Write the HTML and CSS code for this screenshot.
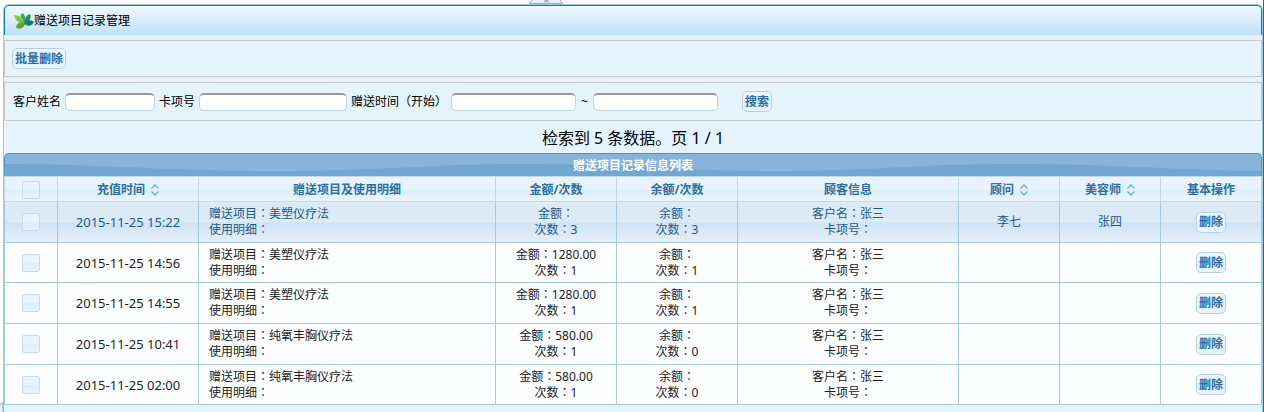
FILE: index.html
```html
<!DOCTYPE html>
<html lang="zh-CN">
<head>
<meta charset="utf-8">
<title>赠送项目记录管理</title>
<link rel="stylesheet" href="styles.css">
</head>
<body>
<svg class="handle-top" viewBox="0 0 34 4" width="34" height="4" aria-hidden="true"><path d="M0 4 3 0H31L34 4Z" fill="#eceefa"/><path d="M0 3.5H34M1 3 3 0M33 3 31 0" stroke="#9da6d3" fill="none"/><path d="M16 0h3v1h1v1h-5V1h1z" fill="#9da6d3"/></svg>
<svg class="handle-side" viewBox="0 0 4 10" width="4" height="10" aria-hidden="true"><path d="M0 3 3 0V10H0Z" fill="#eceefa"/><path d="M0 2.5 3 .5V10" stroke="#9da6d3" fill="none"/></svg>
<main class="page">
  <header class="title-bar">
    <svg class="leaf" viewBox="0 0 20 18" width="20" height="18" aria-hidden="true">
      <path d="M11 12C7 9 5 4 8 1C11 3 13 7 11 12Z" fill="#3fae5c"/>
      <path d="M11 12C5 12 1 8 0 3C6 3 10 7 11 12Z" fill="#8ccf45"/>
      <path d="M11 12C7 9 2 11 2 16C6 18 10 16 11 12Z" fill="#62a83a"/>
      <path d="M11 12C10 7 12 3 16 2C18 6 15 10 11 12Z" fill="#1f9a78"/>
      <path d="M11 12C13 7 17 8 20 10C18 14 14 15 11 12Z" fill="#137a6a"/>
      <path d="M8 3 11 12 3 6M15 4 11 12 18 10M11 12 5 15" stroke="#2c8050" stroke-width=".6" fill="none"/>
    </svg>
    <span>赠送项目记录管理</span>
  </header>
  <div class="panel toolbar"><button class="btn" type="button">批量删除</button></div>
  <form class="panel search">
    <label for="name">客户姓名</label><input class="field field-name" id="name" type="text">
    <label for="card">卡项号</label><input class="field field-card" id="card" type="text">
    <label for="from">赠送时间（开始）</label><input class="field field-date" id="from" type="text">
    <label class="until" for="to">~</label><input class="field field-date" id="to" type="text">
    <button class="btn search-btn" type="button">搜索</button>
  </form>
  <p class="summary">检索到 5 条数据。页 1 / 1</p>
  <section class="grid">
    <h2 class="grid-title">
      <svg class="wave" viewBox="0 0 1258 22" preserveAspectRatio="none" aria-hidden="true"><path d="M0 10C100 10 160 17 270 17C380 17 420 10 520 10C620 10 670 17 770 17C870 17 910 10 1010 10C1110 10 1170 16 1258 17V22H0Z"/></svg>
      <span>赠送项目记录信息列表</span>
    </h2>
    <table class="records">
      <colgroup><col class="c-check"><col class="c-time"><col><col class="c-amount"><col class="c-amount"><col class="c-client"><col class="c-staff"><col class="c-staff"><col class="c-staff"></colgroup>
      <thead><tr>
        <th><input class="tick" type="checkbox" aria-label="全选"></th>
        <th>充值时间<svg class="sort" viewBox="0 0 8 12" width="8" height="12" aria-hidden="true"><path d="M.5 4.5 4 1 7.5 4.5M.5 7.5 4 11 7.5 7.5"/></svg></th>
        <th>赠送项目及使用明细</th><th>金额/次数</th><th>余额/次数</th><th>顾客信息</th>
        <th>顾问<svg class="sort" viewBox="0 0 8 12" width="8" height="12" aria-hidden="true"><path d="M.5 4.5 4 1 7.5 4.5M.5 7.5 4 11 7.5 7.5"/></svg></th>
        <th>美容师<svg class="sort" viewBox="0 0 8 12" width="8" height="12" aria-hidden="true"><path d="M.5 4.5 4 1 7.5 4.5M.5 7.5 4 11 7.5 7.5"/></svg></th>
        <th>基本操作</th>
      </tr></thead>
      <tbody>
        <tr class="active"><td><input class="tick" type="checkbox" aria-label="选择"></td><td class="time">2015-11-25 15:22</td><td class="detail">赠送项目<span class="mark" lang="zh-TW">：</span>美塑仪疗法<br>使用明细<span class="mark" lang="zh-TW">：</span></td><td>金额<span class="mark" lang="zh-TW">：</span><br>次数<span class="mark" lang="zh-TW">：</span>3</td><td>余额<span class="mark" lang="zh-TW">：</span><br>次数<span class="mark" lang="zh-TW">：</span>3</td><td>客户名<span class="mark" lang="zh-TW">：</span>张三<br>卡项号<span class="mark" lang="zh-TW">：</span></td><td>李七</td><td>张四</td><td><button class="btn" type="button">删除</button></td></tr>
        <tr><td><input class="tick" type="checkbox" aria-label="选择"></td><td class="time">2015-11-25 14:56</td><td class="detail">赠送项目<span class="mark" lang="zh-TW">：</span>美塑仪疗法<br>使用明细<span class="mark" lang="zh-TW">：</span></td><td>金额<span class="mark" lang="zh-TW">：</span>1280.00<br>次数<span class="mark" lang="zh-TW">：</span>1</td><td>余额<span class="mark" lang="zh-TW">：</span><br>次数<span class="mark" lang="zh-TW">：</span>1</td><td>客户名<span class="mark" lang="zh-TW">：</span>张三<br>卡项号<span class="mark" lang="zh-TW">：</span></td><td></td><td></td><td><button class="btn" type="button">删除</button></td></tr>
        <tr><td><input class="tick" type="checkbox" aria-label="选择"></td><td class="time">2015-11-25 14:55</td><td class="detail">赠送项目<span class="mark" lang="zh-TW">：</span>美塑仪疗法<br>使用明细<span class="mark" lang="zh-TW">：</span></td><td>金额<span class="mark" lang="zh-TW">：</span>1280.00<br>次数<span class="mark" lang="zh-TW">：</span>1</td><td>余额<span class="mark" lang="zh-TW">：</span><br>次数<span class="mark" lang="zh-TW">：</span>1</td><td>客户名<span class="mark" lang="zh-TW">：</span>张三<br>卡项号<span class="mark" lang="zh-TW">：</span></td><td></td><td></td><td><button class="btn" type="button">删除</button></td></tr>
        <tr><td><input class="tick" type="checkbox" aria-label="选择"></td><td class="time">2015-11-25 10:41</td><td class="detail">赠送项目<span class="mark" lang="zh-TW">：</span>纯氧丰胸仪疗法<br>使用明细<span class="mark" lang="zh-TW">：</span></td><td>金额<span class="mark" lang="zh-TW">：</span>580.00<br>次数<span class="mark" lang="zh-TW">：</span>1</td><td>余额<span class="mark" lang="zh-TW">：</span><br>次数<span class="mark" lang="zh-TW">：</span>0</td><td>客户名<span class="mark" lang="zh-TW">：</span>张三<br>卡项号<span class="mark" lang="zh-TW">：</span></td><td></td><td></td><td><button class="btn" type="button">删除</button></td></tr>
        <tr><td><input class="tick" type="checkbox" aria-label="选择"></td><td class="time">2015-11-25 02:00</td><td class="detail">赠送项目<span class="mark" lang="zh-TW">：</span>纯氧丰胸仪疗法<br>使用明细<span class="mark" lang="zh-TW">：</span></td><td>金额<span class="mark" lang="zh-TW">：</span>580.00<br>次数<span class="mark" lang="zh-TW">：</span>1</td><td>余额<span class="mark" lang="zh-TW">：</span><br>次数<span class="mark" lang="zh-TW">：</span>0</td><td>客户名<span class="mark" lang="zh-TW">：</span>张三<br>卡项号<span class="mark" lang="zh-TW">：</span></td><td></td><td></td><td><button class="btn" type="button">删除</button></td></tr>
      </tbody>
    </table>
  </section>
</main>
</body>
</html>
```
FILE: styles.css
```css
* { box-sizing: border-box; }
html { height: 100%; }
body {
  margin: 0;
  min-height: 100%;
  padding: 4px 0 0 3px;
  display: flex;
  background: #fff;
  border-right: 1px solid #555b66;
  color: #000;
  font: 12px/16px "Noto Sans", "Noto Sans CJK SC", sans-serif;
}
.mark { font-family: "Noto Sans", "Noto Sans CJK TC", sans-serif; }
.handle-top { position: absolute; top: 0; left: 529px; }
.handle-side { position: absolute; bottom: 0; left: 0; }
.page {
  flex: 1;
  min-width: 0;
  background: #e5f3fd;
  border: 1px solid #a3c8e0;
  border-bottom: 0;
  border-radius: 6px 6px 0 0;
}
.title-bar {
  display: flex;
  align-items: center;
  height: 30px;
  padding-left: 9px;
  border: 1px solid #1377b1;
  border-bottom: 0;
  border-radius: 5px 5px 0 0;
  background: linear-gradient(#f0f9fe, #bfe1f5);
}
.panel {
  display: flex;
  align-items: center;
  border: 1px solid #c9c9c9;
  padding: 0 7px;
}
.toolbar { height: 37px; margin-top: 5px; }
.search { height: 39px; margin-top: 5px; padding-left: 8px; gap: 4px; }
.until { padding: 0 1px; }
.btn {
  height: 21px;
  padding: 0 2px;
  border: 1px solid #b5d2e2;
  border-radius: 5px;
  background: linear-gradient(#edf6fd 50%, #e0effb 50%, #ebf5fd);
  color: #2e6e9e;
  font: bold 12px/18px "Noto Sans", "Noto Sans CJK SC", sans-serif;
}
.search-btn { margin-left: 20px; }
.field {
  height: 18px;
  padding: 0 4px;
  border: 1px solid #bdd3e6;
  border-top: 2px solid #999;
  border-radius: 5px;
  background: #fff;
  font: inherit;
}
.field-name { width: 90px; }
.field-card { width: 148px; }
.field-date { width: 125px; }
.summary {
  margin: 0;
  padding: 5px 0 3px;
  text-align: center;
  font-size: 16px;
  line-height: 24px;
}
.grid-title {
  position: relative;
  margin: 0;
  height: 23px;
  overflow: hidden;
  border: 1px solid #4297d7;
  border-bottom: 0;
  border-radius: 5px 5px 0 0;
  background: #88b4d9;
  color: #fff;
  font-size: 12px;
  line-height: 24px;
  text-align: center;
}
.grid-title span { position: relative; }
.wave { position: absolute; inset: 0; width: 100%; height: 100%; fill: #71a8d2; }
.records {
  width: 100%;
  table-layout: fixed;
  border-collapse: collapse;
  background: #fdfeff;
  color: #222;
}
.c-check { width: 53px; }
.c-time { width: 141px; }
.c-amount { width: 121px; }
.c-client { width: 221px; }
.c-staff { width: 101px; }
.records th, .records td {
  padding: 0;
  border: 1px solid #a6c9e2;
  text-align: center;
}
.records th {
  height: 25px;
  padding-top: 1px;
  border-color: #c0d9ea;
  background: linear-gradient(#e8f3fd 50%, #ddeefb 50%, #eaf4fd);
  color: #2e6e9e;
}
.records td { height: 41px; line-height: 16px; }
.records tr:nth-child(3n+2) td { height: 40px; }
.records .time { font-size: 13px; }
.records .detail { padding-left: 10px; text-align: left; }
.records .active td {
  background: linear-gradient(#dceaf6 50%, #cfe2f3 50%, #e6eff9);
  color: #1d5987;
}
.sort { margin-left: 6px; vertical-align: -2px; fill: none; stroke: #6da8d5; stroke-width: 1.3; }
.tick {
  appearance: none;
  display: block;
  width: 18px;
  height: 18px;
  margin: 0 auto;
  border: 1px solid #c5dbec;
  border-radius: 2px;
  background: linear-gradient(#e8f3fd 50%, #dcedfa 50%, #e8f3fd);
}
```
